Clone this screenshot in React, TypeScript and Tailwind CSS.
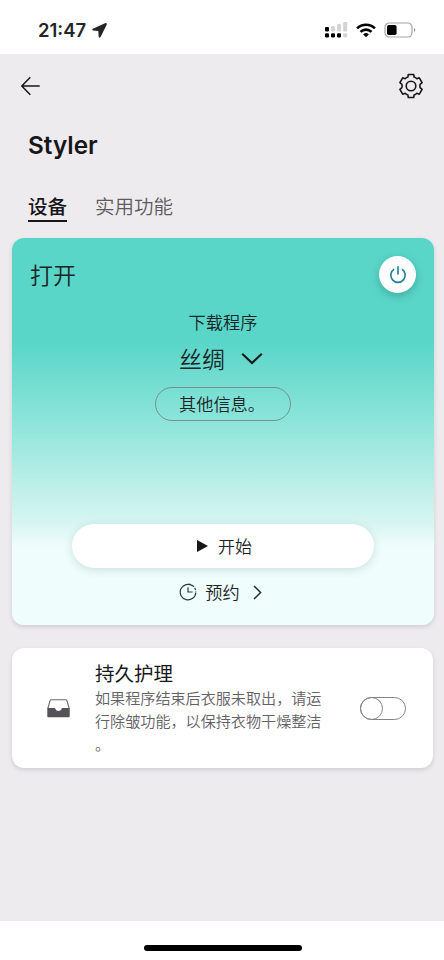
const careText = ['如果程序结束后衣服未取出，请运', '行除皱功能，以保持衣物干燥整洁', '。'];

function StatusBar() {
  return (
    <div className="flex h-[54px] items-center bg-white pl-[38px] pr-[28px] pt-[6px]">
      <span className="font-['Inter','Noto_Sans_CJK_SC',sans-serif] text-[18.5px] font-semibold leading-6 text-[#242528]">
        21:47
      </span>
      <svg className="ml-[6px]" width="15" height="15" viewBox="0 0 15 15" fill="#242528">
        <path d="M13 .2.9 5.8c-1 .4-.8 1.6.2 1.7l5.2.4.4 5.8c.1 1.1 1.3 1.3 1.8.3L14.7 1.8C15.1.7 14.2-.3 13 .2z" />
      </svg>

      {/* Dual sim signal */}
      <svg className="ml-auto" width="24" height="18" viewBox="0 0 24 18">
        <rect x="1" y="6" width="4" height="4.5" rx="1.2" fill="#000" />
        <rect x="7" y="5" width="4" height="5.5" rx="1.2" fill="#d5d3d6" />
        <rect x="13" y="3" width="4" height="7.5" rx="1.2" fill="#d5d3d6" />
        <rect x="19.2" y="1" width="4" height="9.5" rx="1.2" fill="#d5d3d6" />
        <rect x="1" y="12.2" width="4" height="4.3" rx="1.2" fill="#000" />
        <rect x="7" y="12.2" width="4" height="4.3" rx="1.2" fill="#000" />
        <rect x="13" y="12.2" width="4" height="4.3" rx="1.2" fill="#000" />
        <rect x="19.2" y="12.2" width="4" height="4.3" rx="1.2" fill="#d5d3d6" />
      </svg>
      <svg className="ml-[8px]" width="20" height="15" viewBox="0 0 20 15" fill="none" stroke="#000" strokeWidth="2.7">
        <path d="M1.1 5.4a12.7 12.7 0 0 1 17.8 0" />
        <path d="M4.5 8.9a7.8 7.8 0 0 1 11 0" />
        <path d="M10 14.2 7.2 11.4a4 4 0 0 1 5.6 0z" fill="#000" stroke="none" />
      </svg>
      <svg className="ml-[8px]" width="32" height="16" viewBox="0 0 32 16">
        <rect x="1" y="1" width="27" height="14" rx="4.2" fill="none" stroke="#a5a3a6" strokeWidth="1.2" />
        <rect x="3" y="3" width="9.6" height="10" rx="1.8" fill="#000" />
        <path d="M30 6v4c1.6-.6 1.6-3.4 0-4z" fill="#8b898c" />
      </svg>
    </div>
  );
}

function Header() {
  return (
    <div className="flex h-[63px] items-center justify-between pl-[20px] pr-[20px]">
      <svg width="22" height="20" viewBox="0 0 22 20" fill="none" stroke="#17171a" strokeWidth="1.5">
        <path d="M10.3 1.2 1.8 10l8.5 8.8M1.8 10h17.9" />
      </svg>
      <svg width="26" height="26" viewBox="0 0 26 26" fill="none" stroke="#17171a" strokeWidth="1.6" strokeLinejoin="round">
        <path d="M10.3 1.5h5.4l.4 2.500q1.500.4 2.700 1.700l2.500-.9 2.800 4.900-2 1.700q-.5 1.600 0 3.200l2 1.700-2.800 4.900-2.500-.9q-1.200 1.300-2.700 1.700l-.4 2.500h-5.400l-.4-2.500q-1.500-.4-2.700-1.700l-2.500.9-2.800-4.900 2-1.700q.5-1.600 0-3.200l-2-1.700 2.800-4.900 2.500.9q1.200-1.300 2.700-1.700z" />
        <circle cx="13" cy="13" r="4.8" />
      </svg>
    </div>
  );
}

function Tabs() {
  return (
    <div className="mt-[31px] flex gap-7 pl-7 text-[19.5px] leading-[28px]">
      <div className="h-[30px] border-b-2 border-[#17171a] font-medium text-[#17171a]">设备</div>
      <div className="font-[350] text-[#5d5b60]">实用功能</div>
    </div>
  );
}

function DeviceCard() {
  return (
    <div className="ml-3 mr-[10px] mt-4 flex h-[387px] flex-none flex-col items-center rounded-xl bg-[linear-gradient(180deg,#5ad6c8_0px,#5ad6c8_105px,#8ae4d9_180px,#b6eee6_240px,#d9f6f2_288px,#effdfc_308px,#effdfc_387px)] text-[#1b2426] shadow-[0_2px_4px_rgba(60,50,70,0.16)]">
      <div className="mt-[18px] flex h-[37px] w-full items-center justify-between px-[18px]">
        <span className="-mt-[2px] text-[23px] font-[350] leading-[34px]">打开</span>
        <button className="flex size-[37px] items-center justify-center rounded-full bg-white shadow-[0_3px_8px_rgba(20,90,85,0.35)]">
          <svg width="18" height="18" viewBox="0 0 18 18" fill="none" stroke="#178093" strokeWidth="1.6">
            <path d="M9 .3v8.2M5.1 3.1a7.2 7.2 0 1 0 7.8 0" />
          </svg>
        </button>
      </div>

      <div className="mt-[17px] text-[17.2px] font-[350] leading-6">下载程序</div>
      <div className="mr-[4px] mt-[7px] flex h-[34px] items-center gap-4">
        <span className="text-[23px] font-[350] leading-[34px]">丝绸</span>
        <svg width="22" height="14" viewBox="0 0 22 14" fill="none" stroke="#17171a" strokeWidth="2.1">
          <path d="M1.2 2.8 11 12l9.8-9.2" />
        </svg>
      </div>
      <div className="mt-[12px] flex h-[34px] w-[136px] items-center rounded-full border border-[#7b8f91] pl-[23px] text-[17.2px] font-[350] leading-6">
        其他信息。
      </div>

      <button className="mt-[103px] flex h-[44px] w-[302px] items-center rounded-full bg-white pl-[125px] shadow-[0_2px_9px_rgba(40,110,110,0.2)]">
        <svg width="11" height="12" viewBox="0 0 11 12" fill="#17171a">
          <path d="M0 0v12l11-6z" />
        </svg>
        <span className="ml-[10px] text-[17px] font-[350] leading-6">开始</span>
      </button>

      <div className="mr-[5px] mt-[12px] flex h-6 items-center">
        <svg width="18" height="18" viewBox="0 0 18 18" fill="none" stroke="#333a3d" strokeWidth="1.2">
          <path d="M13.6 2.8A7.8 7.8 0 1 0 16.8 9.4" />
          <path d="M9.7 1.2a7.8 7.8 0 0 1 7.1 7.4" strokeDasharray="2.5 1" />
          <path d="M9 4.2V9h4.6" />
        </svg>
        <span className="ml-[8px] text-[17.2px] font-[350] leading-6">预约</span>
        <svg className="ml-[13px]" width="9" height="15" viewBox="0 0 9 15" fill="none" stroke="#252a2d" strokeWidth="1.5">
          <path d="m1 1 6.6 6.5L1 14" />
        </svg>
      </div>
    </div>
  );
}

function CareCard() {
  return (
    <div className="ml-3 mr-[11px] mt-[23px] flex h-[120px] flex-none rounded-xl bg-white shadow-[0_2px_4px_rgba(60,50,70,0.16)]">
      <svg className="ml-[35px] mt-[51px]" width="23" height="19" viewBox="0 0 23 19">
        <path d="M.8 9.5 3 1.9C3.2 1.2 3.6.8 4.3.8h14.4c.7 0 1.1.4 1.3 1.1l2.2 7.6" fill="none" stroke="#6b696d" strokeWidth="1.1" />
        <path d="M.3 9.1h7.3c.5 0 .7.3.9.8.4 1.2 1.5 2 3 2s2.6-.8 3-2c.2-.5.4-.8.9-.8h7.3v8.1c0 .7-.4 1.1-1.1 1.1H1.4c-.7 0-1.1-.4-1.1-1.1z" fill="#545256" />
      </svg>
      <div className="ml-[25px] w-[240px] pt-[12px]">
        <div className="text-[19.5px] font-normal leading-[26px] text-[#17171a]">持久护理</div>
        <div className="text-[15.1px] font-[350] leading-[23px] text-[#636166]">
          {careText.map((line) => (
            <div key={line} className="whitespace-nowrap">{line}</div>
          ))}
        </div>
      </div>
      <div className="ml-[25px] mt-[49px] h-[23px] w-[46px] rounded-full border border-[#858387]">
        <div className="-ml-px -mt-px size-[23px] rounded-full border border-[#858387]" />
      </div>
    </div>
  );
}

export default function App() {
  return (
    <div className="flex h-[960px] w-[444px] flex-col overflow-hidden bg-[#edebee] font-['Noto_Sans_CJK_SC',sans-serif]">
      <StatusBar />
      <Header />
      <h1 className="mt-[12px] pl-7 font-['Inter','Noto_Sans_CJK_SC',sans-serif] text-[24.3px] font-semibold leading-8 text-[#17171a]">
        Styler
      </h1>
      <Tabs />
      <DeviceCard />
      <CareCard />
      <div className="mt-auto flex h-[39px] justify-center bg-white pl-[2px] pt-[24px]">
        <div className="h-[6px] w-[158px] rounded-full bg-black" />
      </div>
    </div>
  );
}
